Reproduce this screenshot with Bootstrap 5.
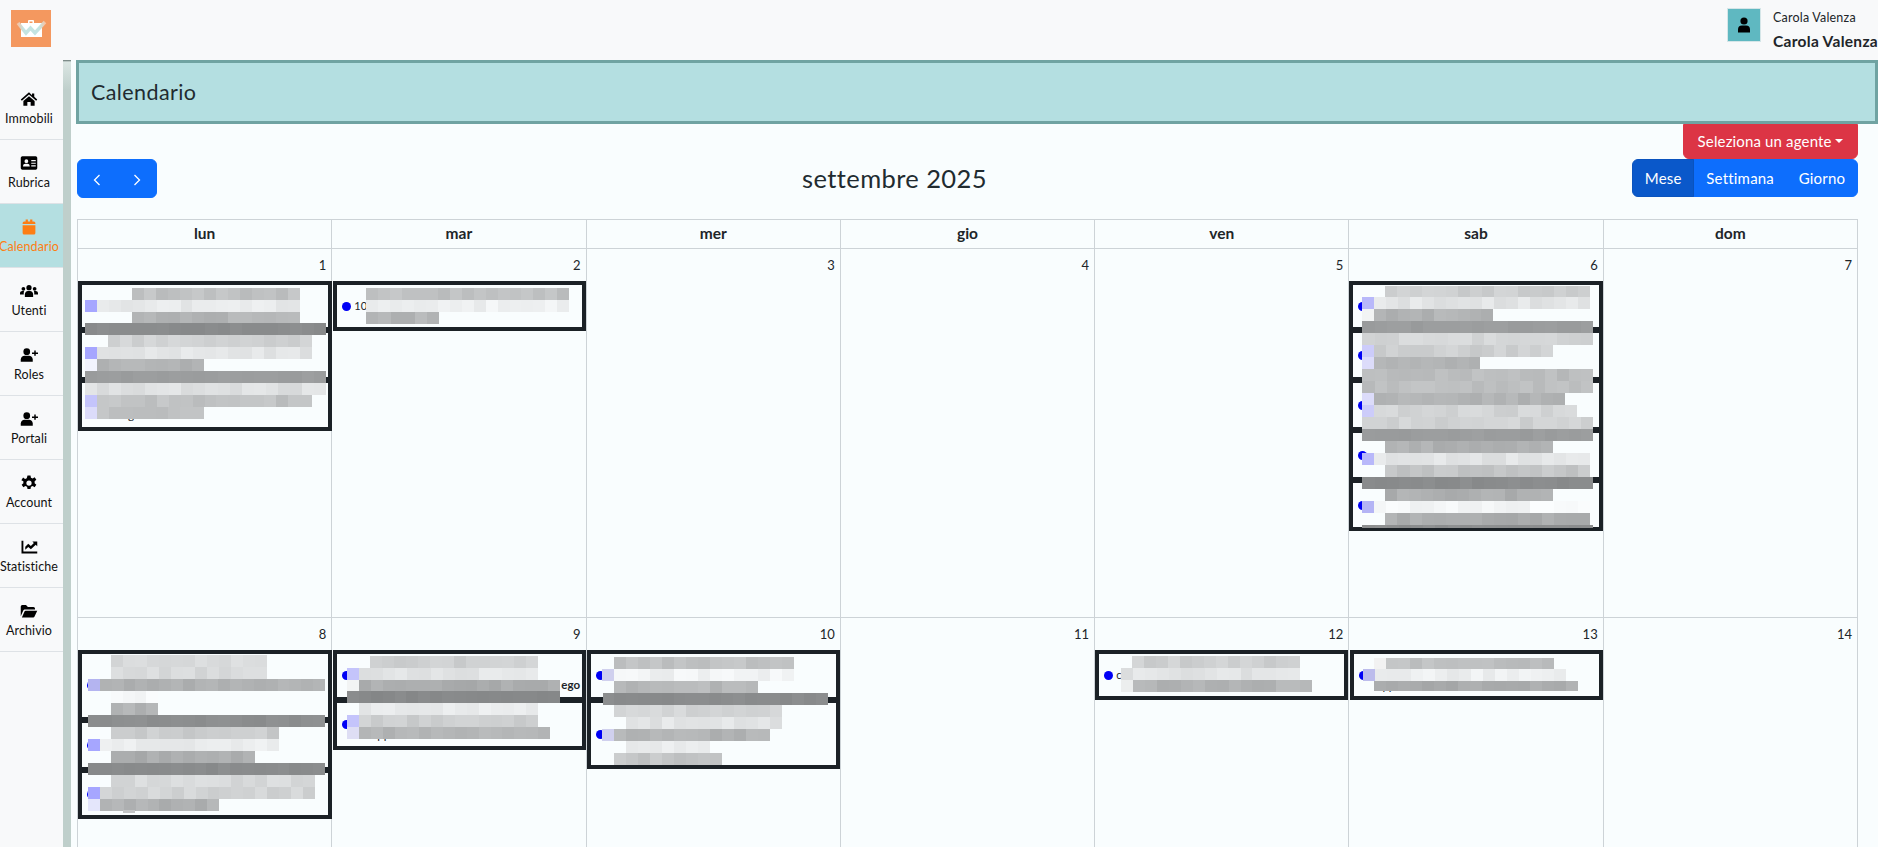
<!DOCTYPE html>
<html lang="it">
<head>
    <meta charset="UTF-8">
    <meta name="viewport" content="width=device-width, initial-scale=1.0">
    <title>Calendario</title>
    <link href="https://cdn.jsdelivr.net/npm/bootstrap@5.3.3/dist/css/bootstrap.min.css" rel="stylesheet">
    <style>
        html, body { height: 100%; overflow: hidden; }
        body { font-family: Lato, "Open Sans", sans-serif; background: #f9fdfe; color: #212529; }
        .top-bar { height: 60px; background: #f8f9fa; }
        .logo-box { width: 40px; height: 37px; margin: 10px 0 0 11px; background: #f4985f; }
        .user-pic { width: 34px; height: 34px; background: #5fb8c1; border: 1px solid #d5e6e8; }
        .user-small { font-size: 12.5px; line-height: 18px; margin-top: 1px; letter-spacing: .2px; }
        .user-big { font-size: 15.5px; line-height: 22px; font-weight: 700; margin-top: 3px; white-space: nowrap; letter-spacing: .3px; }
        .page-body { height: calc(100vh - 60px); }
        .side-nav { width: 63px; padding-top: 16px; background: #f8f9fa; }
        .side-link { height: 64px; border-bottom: 1px solid #dee2e6; color: #111; font-size: 12.5px; letter-spacing: .1px; text-decoration: none; white-space: nowrap; overflow: hidden; padding: 14px 5px 0 0; }
        .side-link svg { width: 18px; height: 18px; fill: #000; margin-bottom: 2px; }
        .side-link.on { background: #b4dfe1; color: #fd7e14; }
        .side-link.on svg { fill: #fd7e14; }
        .side-strip { width: 8px; background: linear-gradient(#5f6f6c 0, #dbe6e3 2px, #bfcfcb 30px); margin-right: 5px; }
        .title-bar { height: 64px; background: #b4dfe1; border: 3px solid #70a3a2; padding-left: 12px; font-size: 21.5px; letter-spacing: .4px; color: #212b30; }
        .cal-wrap { padding: 0 20px 0 1px; }
        .agent-btn { height: 35px; width: 175px; font-size: 15px; padding: 0; border-radius: 0 0 6px 6px; letter-spacing: .15px; }
        .cal-tools { height: 38px; margin-bottom: 22px; margin-top: 0; }
        .nav-arrows { width: 80px; height: 39px; }
        .nav-arrows .btn { padding: 0; }
        .nav-arrows svg { width: 16px; height: 16px; fill: none; stroke: #fff; stroke-width: 1.3; }
        .cal-title { font-size: 25.5px; margin: 0; font-weight: 400; letter-spacing: .4px; color: #212b30; }
        .view-btns { width: 226px; height: 38px; }
        .view-btns .btn { font-size: 15px; padding: 0; letter-spacing: .2px; }
        .cal-table { table-layout: fixed; width: 1781px; border-collapse: collapse; background: #f9fdfe; }
        .cal-table th, .cal-table td { border: 1px solid #cdd3d7; padding: 0; }
        .cal-table th { height: 29px; text-align: center; font-size: 15.5px; font-weight: 700; }
        .cal-table td { height: 369px; vertical-align: top; }
        .day-num { height: 32px; font-size: 13px; text-align: right; padding: 7px 5px 0 0; line-height: 18px; }
        .ev-stack { position: relative; height: 0; }
        .ev-stack.first-col { margin-right: -1px; }
        .ev-stack.inset { margin-left: 1px; }
        .ev-seg { border: 4px solid #1b2126; margin-top: -2px; padding-left: 5px; font-size: 11px; gap: 3px; }
        .ev-seg:first-child { margin-top: 0; }
        .ev-dot { width: 9px; height: 9px; border-radius: 50%; background: #0000f5; flex: none; }
        .mosaic-row { position: absolute; height: 12px; display: flex; }
        .mosaic-row i { display: block; flex: 1 1 0; }
        .stray-text { position: absolute; font-size: 11.5px; line-height: 14px; color: #212529; }
    </style>
</head>
<body>
    <header class="top-bar d-flex justify-content-between">
        <div class="logo-box">
            <svg width="40" height="37" viewBox="0 0 40 37">
                <defs>
                    <linearGradient id="wFade" x1="0" x2="1" y1="0" y2="0">
                        <stop offset="0" stop-color="#f4c4a6"/>
                        <stop offset=".2" stop-color="#c4e4e2"/>
                        <stop offset=".8" stop-color="#c4e4e2"/>
                        <stop offset="1" stop-color="#f4c4a6"/>
                    </linearGradient>
                </defs>
                <path d="M10 13h7v-2a1 1 0 0 1 1-1h4a1 1 0 0 1 1 1v2h8v14H10z" fill="#fff"/>
                <path d="M18.500 13v-1.500h3V13z" fill="#f4985f"/>
                <polyline points="7,13 15,23 19.500,18 24,23 34,12" fill="none" stroke="url(#wFade)" stroke-width="3.500"/>
            </svg>
        </div>
        <div class="d-flex overflow-hidden">
            <div class="user-pic d-flex align-items-center justify-content-center mt-2 me-2">
                <svg width="14" height="16" viewBox="0 0 14 16"><circle cx="7" cy="4" r="3.600"/><path d="M1 15.500v-3a4 4 0 0 1 4-4h4a4 4 0 0 1 4 4v3z"/></svg>
            </div>
            <div class="ms-1 pt-2">
                <div class="user-small">Carola Valenza</div>
                <div class="user-big">Carola Valenza</div>
            </div>
        </div>
    </header>

    <div class="page-body d-flex">
        <nav class="side-nav d-flex flex-column flex-shrink-0">
            <a href="#" class="side-link d-flex flex-column align-items-center">
                <svg viewBox="0 0 24 24"><path d="M12 3 1 12.500l1.500 1.700L12 6.100l9.500 8.100 1.500-1.700-4-3.400V4.500h-3v2.400z"/><path d="M4.500 14.700 12 8.300l7.500 6.400V21h-5.300v-5h-4.400v5H4.500z"/></svg>
                Immobili
            </a>
            <a href="#" class="side-link d-flex flex-column align-items-center">
                <svg viewBox="0 0 24 24"><path fill-rule="evenodd" d="M3 3h18a2.500 2.500 0 0 1 2 2v14a2.500 2.500 0 0 1-2 2H3a2.500 2.500 0 0 1-2-2V5a2.500 2.500 0 0 1 2-2zm5.500 4a2.500 2.500 0 1 0 0 5 2.500 2.500 0 0 0 0-5zM4 16.500h9c0-2.500-1.500-3.500-3-3.500H7c-1.500 0-3 1-3 3.500zM15 8v1.500h6V8zm0 3.500V13h6v-1.500zm0 3.500v1.500h6V15z"/></svg>
                Rubrica
            </a>
            <a href="#" class="side-link on d-flex flex-column align-items-center">
                <svg viewBox="0 0 24 24"><path d="M3.500 9.500h17V20a2 2 0 0 1-2 2h-13a2 2 0 0 1-2-2z"/><path d="M5.500 4.500h2V2h3v2.500h3V2h3v2.500h2a2 2 0 0 1 2 2v1.500h-17V6.500a2 2 0 0 1 2-2z"/></svg>
                Calendario
            </a>
            <a href="#" class="side-link d-flex flex-column align-items-center">
                <svg viewBox="0 0 24 24"><circle cx="12" cy="7.500" r="3.500"/><circle cx="4.500" cy="9" r="2.500"/><circle cx="19.500" cy="9" r="2.500"/><path d="M6.500 20v-3.500c0-2.500 2-4.500 4-4.500h3c2 0 4 2 4 4.500V20z"/><path d="M0 16.500V15c0-1.800 1.500-3 3-3h2.500C5 13 5 15 5 16.500zM24 16.500V15c0-1.800-1.500-3-3-3h-2.500c.5 1 .5 3 .5 4.500z"/></svg>
                Utenti
            </a>
            <a href="#" class="side-link d-flex flex-column align-items-center">
                <svg viewBox="0 0 24 24"><circle cx="9" cy="7.500" r="4.500"/><path d="M1 21v-3c0-3 2.500-5 5-5h6c2.500 0 5 2 5 5v3z"/><path d="M19 6h2v2.500h3v2h-3V13h-2v-2.500h-3v-2h3z"/></svg>
                Roles
            </a>
            <a href="#" class="side-link d-flex flex-column align-items-center">
                <svg viewBox="0 0 24 24"><circle cx="9" cy="7.500" r="4.500"/><path d="M1 21v-3c0-3 2.500-5 5-5h6c2.500 0 5 2 5 5v3z"/><path d="M19 6h2v2.500h3v2h-3V13h-2v-2.500h-3v-2h3z"/></svg>
                Portali
            </a>
            <a href="#" class="side-link d-flex flex-column align-items-center">
                <svg viewBox="0 0 24 24"><path fill-rule="evenodd" d="m10 2h4l.6 3 2.300 1 2.600-1.700 2.300 3.400-2.300 2.100v2.400l2.300 2.100-2.300 3.400-2.600-1.700-2.300 1-.6 3h-4l-.6-3-2.300-1-2.600 1.700-2.300-3.400 2.300-2.100v-2.400L1.800 8.200l2.300-3.400 2.600 1.700 2.300-1zM12 8.500a3.500 3.500 0 1 0 0 7 3.500 3.500 0 0 0 0-7z"/></svg>
                Account
            </a>
            <a href="#" class="side-link d-flex flex-column align-items-center">
                <svg viewBox="0 0 24 24"><path d="M2 3.500h2.500V18H23v2.500H2z"/><path d="M7 11.500 11 7.500l3.500 3L18.500 6.500 16.500 4.500H23V11l-2-2-6.500 6-3.500-3-4 3.500z"/></svg>
                Statistiche
            </a>
            <a href="#" class="side-link d-flex flex-column align-items-center">
                <svg viewBox="0 0 24 24"><path d="M1 19V6a2 2 0 0 1 2-2h5l2.500 2.500H18a2 2 0 0 1 2 2V10H7c-1.500 0-2.200.7-2.800 1.800z"/><path d="M2.500 20.500 6 12.500c.3-.7.8-1 1.500-1H23l-3.800 8c-.3.700-.8 1-1.500 1z"/></svg>
                Archivio
            </a>
        </nav>
        <div class="side-strip flex-shrink-0"></div>

        <main class="flex-grow-1 overflow-hidden">
            <div class="title-bar d-flex align-items-center">Calendario</div>
            <div class="cal-wrap">
                <div class="d-flex justify-content-end">
                    <button type="button" class="btn btn-danger dropdown-toggle agent-btn">Seleziona un agente</button>
                </div>
                <div class="cal-tools d-flex justify-content-between align-items-center">
                    <div class="btn-group nav-arrows">
                        <button type="button" class="btn btn-primary"><svg viewBox="0 0 16 16"><polyline points="10.500,3 5.500,8 10.500,13"/></svg></button>
                        <button type="button" class="btn btn-primary"><svg viewBox="0 0 16 16"><polyline points="5.500,3 10.500,8 5.500,13"/></svg></button>
                    </div>
                    <h2 class="cal-title">settembre 2025</h2>
                    <div class="btn-group view-btns">
                        <button type="button" class="btn btn-primary active">Mese</button>
                        <button type="button" class="btn btn-primary">Settimana</button>
                        <button type="button" class="btn btn-primary">Giorno</button>
                    </div>
                </div>
                <table class="cal-table">
                    <thead>
                        <tr><th>lun</th><th>mar</th><th>mer</th><th>gio</th><th>ven</th><th>sab</th><th>dom</th></tr>
                    </thead>
                    <tbody>
                        <tr>
                            <td><div class="day-num">1</div><div class="ev-stack first-col" id="d1"></div></td>
                            <td><div class="day-num">2</div><div class="ev-stack inset" id="d2"></div></td>
                            <td><div class="day-num">3</div></td>
                            <td><div class="day-num">4</div></td>
                            <td><div class="day-num">5</div></td>
                            <td><div class="day-num">6</div><div class="ev-stack" id="d6"></div></td>
                            <td><div class="day-num">7</div></td>
                        </tr>
                        <tr>
                            <td><div class="day-num">8</div><div class="ev-stack first-col" id="d8"></div></td>
                            <td><div class="day-num">9</div><div class="ev-stack inset" id="d9"></div></td>
                            <td><div class="day-num">10</div><div class="ev-stack" id="d10"></div></td>
                            <td><div class="day-num">11</div></td>
                            <td><div class="day-num">12</div><div class="ev-stack" id="d12"></div></td>
                            <td><div class="day-num">13</div><div class="ev-stack inset" id="d13"></div></td>
                            <td><div class="day-num">14</div></td>
                        </tr>
                    </tbody>
                </table>
            </div>
        </main>
    </div>

    <script src="https://cdn.jsdelivr.net/npm/bootstrap@5.3.3/dist/js/bootstrap.bundle.min.js"></script>
    <script>
        // appuntamenti oscurati: righe a mosaico [y, x0, x1, tono, colore prima cella]
        const viola = '#a6a6ff', lilla = '#c4c4fb', chiaro = '#dcdcfa';
        const eventi = {
            d1: { x: 78, y: 281, seg: [[50, ''], [52, ''], [52, '']],
                testi: [[128, 408, 'g']],
                righe: [[288,132,300,192],[300,85,300,232,viola],[312,132,300,178],[323,85,326,138],
                        [335,108,312,208],[347,85,312,226,viola],[359,85,204,178,'#f2f4fe'],[371,85,326,155],
                        [383,85,326,222],[395,85,312,192,lilla],[407,85,204,192,chiaro]] },
            d2: { x: 334, y: 281, seg: [[50, '10']],
                righe: [[288,367,570,192],[300,367,570,238],[312,367,440,180]] },
            d6: { x: 1349, y: 281, seg: [[50, ''], [52, ''], [52, ''], [52, ''], [52, '']],
                righe: [[286,1385,1590,205],[297,1362,1590,226,'#b8b8fa'],[309,1362,1493,178,'#f2f4f4'],[321,1362,1593,155],
                        [333,1362,1593,212],[345,1362,1553,205,'#ccccfa'],[357,1362,1480,180,chiaro],[369,1362,1593,186],
                        [381,1362,1593,190],[393,1362,1565,178,chiaro],[405,1362,1577,210,'#ccccfa'],[417,1362,1593,208],
                        [429,1362,1593,155],[441,1385,1553,176],[453,1362,1590,226,'#b8b8fa'],[465,1385,1590,196],
                        [477,1362,1593,138],[489,1385,1553,174],[501,1362,1590,244,'#b4b4f5'],[513,1385,1590,172],
                        [525,1362,1593,140,null,3]] },
            d8: { x: 78, y: 651, seg: [[71, ''], [52, ''], [50, '']],
                righe: [[656,111,267,216],[668,111,267,216],[680,88,325,176,'#b4b4f0'],[692,111,158,246],[704,111,158,178],[716,88,325,140],
                        [728,111,279,202],[740,88,279,234,viola],[752,111,255,172],[764,88,325,138],
                        [776,111,315,216],[788,88,315,210,viola],[800,88,219,176,'#e4e6fb'],[811,123,135,190,null,3]] },
            d9: { x: 334, y: 651, seg: [[51, ''], [51, '']],
                testi: [[562, 679, 'ego', true], [378, 729, 'pp']],
                righe: [[657,371,539,206],[669,348,539,226,lilla],[681,348,561,172,'#f2f4f4'],[692,348,561,135],
                        [704,360,539,232],[716,348,539,205,lilla],[728,348,551,180,'#dedef4']] },
            d10: { x: 587, y: 651, seg: [[51, ''], [70, '']],
                righe: [[658,614,794,192],[670,602,794,240,'#d0d0ee'],[682,614,758,182],[694,603,828,138],
                        [706,614,782,212],[718,626,782,226],[730,602,770,178,'#d0d0ee'],[742,626,710,236],[754,614,722,196]] },
            d12: { x: 1095, y: 651, seg: [[50, 'c']],
                righe: [[657,1132,1300,206],[669,1121,1300,226],[681,1121,1312,178,'#eceeee']] },
            d13: { x: 1350, y: 651, seg: [[50, '']],
                testi: [[1382, 680, 'pp']],
                righe: [[659,1374,1554,190,'#f2f2f2'],[670,1363,1566,236,'#bcbcec'],[682,1374,1578,170,null,10]] }
        };

        // tono variabile ma ripetibile
        let seme = 11;
        function variazione() {
            seme = (seme * 137 + 59) % 251;
            return seme / 251 - 0.5;
        }

        for (const id in eventi) {
            const ev = eventi[id];
            const box = document.getElementById(id);
            box.innerHTML = ev.seg.map(s => `
                <div class="ev-seg d-flex align-items-center" style="height:${s[0]}px">
                    <span class="ev-dot"></span><span>${s[1]}</span>
                </div>`).join('');
            (ev.testi || []).forEach(t => {
                const el = document.createElement('span');
                el.className = 'stray-text' + (t[3] ? ' fw-bold' : '');
                el.textContent = t[2];
                el.style.left = (t[0] - ev.x) + 'px';
                el.style.top = (t[1] - ev.y) + 'px';
                box.appendChild(el);
            });
            ev.righe.forEach(r => {
                const riga = document.createElement('div');
                riga.className = 'mosaic-row';
                riga.style.left = (r[1] - ev.x) + 'px';
                riga.style.top = (r[0] - ev.y) + 'px';
                riga.style.width = (r[2] - r[1]) + 'px';
                if (r[5]) riga.style.height = r[5] + 'px';
                const celle = Math.max(1, Math.round((r[2] - r[1]) / 12));
                for (let i = 0; i < celle; i++) {
                    const c = document.createElement('i');
                    const escursione = r[3] < 160 ? 6 : 15;
                    const v = Math.min(252, Math.round(r[3] + variazione() * escursione));
                    c.style.background = (i === 0 && r[4]) ? r[4] : `rgb(${v},${v + 2},${v + 3})`;
                    riga.appendChild(c);
                }
                box.appendChild(riga);
            });
        }
    </script>
</body>
</html>
